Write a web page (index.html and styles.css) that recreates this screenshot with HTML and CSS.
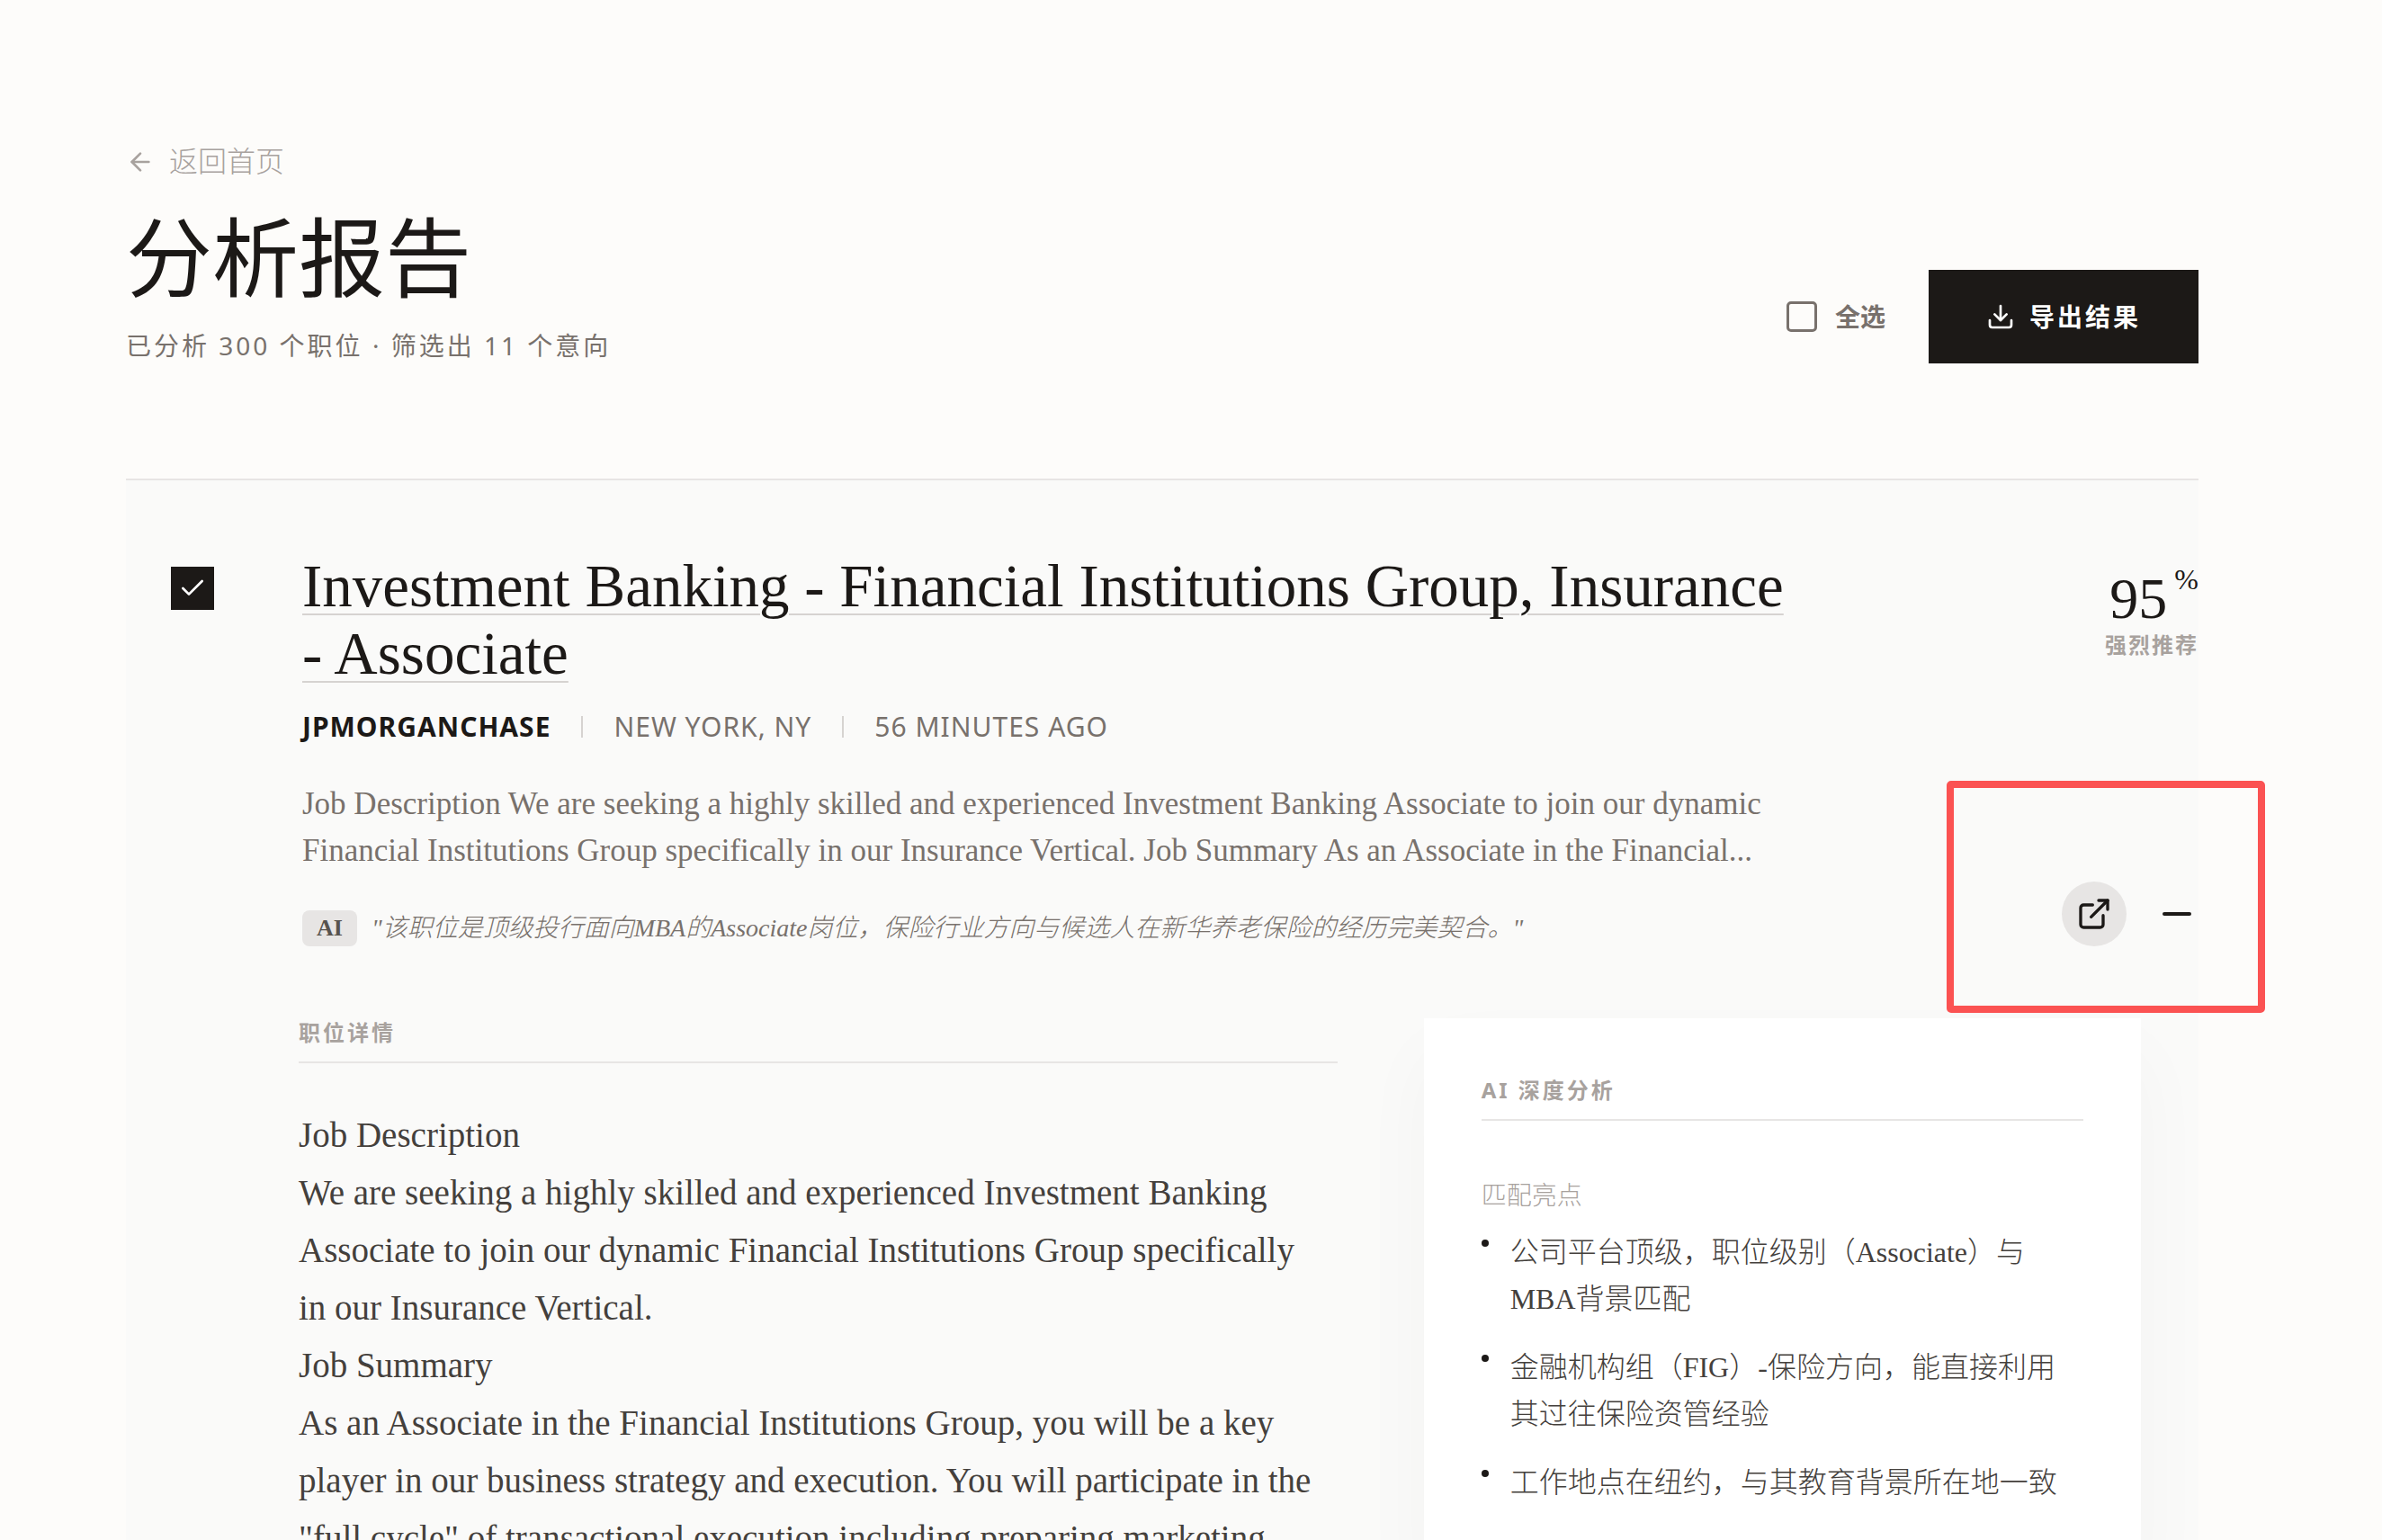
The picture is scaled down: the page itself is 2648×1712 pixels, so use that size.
FILE: index.html
```html
<!DOCTYPE html>
<html lang="zh-CN">
<head>
    <meta charset="UTF-8">
    <meta name="viewport" content="width=device-width, initial-scale=1.0">
    <title>分析报告</title>
    <link rel="stylesheet" href="styles.css">
</head>
<body>
    <div class="page">
        <header class="header">
            <div class="header-info">
                <a class="back" href="#">
                    <svg class="icon-32" viewBox="0 0 24 24" stroke-width="2"><path d="m12 19-7-7 7-7"/><path d="M19 12H5"/></svg>
                    返回首页
                </a>
                <h1>分析报告</h1>
                <p class="summary">已分析 300 个职位 · 筛选出 11 个意向</p>
            </div>
            <div class="header-actions">
                <label class="select-all">
                    <input type="checkbox" class="box">
                    全选
                </label>
                <button type="button" class="export">
                    <svg class="icon-32" viewBox="0 0 24 24" stroke-width="2"><path d="M12 3v12"/><path d="m7 10 5 5 5-5"/><path d="M21 15v4a2 2 0 0 1-2 2H5a2 2 0 0 1-2-2v-4"/></svg>
                    导出结果
                </button>
            </div>
        </header>

        <main class="job">
            <div class="job-head">
                <label class="pick">
                    <input type="checkbox" class="pick-input" aria-label="选择职位" checked>
                    <svg class="icon-32" viewBox="0 0 24 24" stroke-width="2"><path d="M20 6 9 17l-5-5"/></svg>
                </label>
                <div class="job-main">
                    <h2><a href="#">Investment Banking - Financial Institutions Group, Insurance - Associate</a></h2>
                    <div class="meta">
                        <strong>JPMORGANCHASE</strong>
                        <span class="sep"></span>
                        <span>NEW YORK, NY</span>
                        <span class="sep"></span>
                        <span>56 MINUTES AGO</span>
                    </div>
                    <p class="excerpt">Job Description We are seeking a highly skilled and experienced Investment Banking Associate to join our dynamic Financial Institutions Group specifically in our Insurance Vertical. Job Summary As an Associate in the Financial...</p>
                    <div class="ai-note">
                        <span class="badge">AI</span>
                        <em>"该职位是顶级投行面向MBA的Associate岗位，保险行业方向与候选人在新华养老保险的经历完美契合。"</em>
                    </div>
                </div>
                <div class="job-side">
                    <div class="score">
                        <div class="score-value"><span class="num">95</span><span class="pct">%</span></div>
                        <div class="score-label">强烈推荐</div>
                    </div>
                    <div class="actions">
                        <a class="open" href="#" aria-label="打开职位链接">
                            <svg class="icon-40" viewBox="0 0 24 24" stroke-width="2"><path d="M15 3h6v6"/><path d="M10 14 21 3"/><path d="M18 13v6a2 2 0 0 1-2 2H5a2 2 0 0 1-2-2V8a2 2 0 0 1 2-2h6"/></svg>
                        </a>
                        <button type="button" class="collapse" aria-label="收起">
                            <svg class="icon-48" viewBox="0 0 24 24" stroke-width="2"><path d="M5 12h14"/></svg>
                        </button>
                    </div>
                    <div class="highlight"></div>
                </div>
            </div>

            <div class="detail">
                <article class="description">
                    <h3>职位详情</h3>
                    <p>Job Description</p>
                    <p>We are seeking a highly skilled and experienced Investment Banking Associate to join our dynamic Financial Institutions Group specifically in our Insurance Vertical.</p>
                    <p>Job Summary</p>
                    <p>As an Associate in the Financial Institutions Group, you will be a key player in our business strategy and execution. You will participate in the "full cycle" of transactional execution including preparing marketing</p>
                </article>
                <aside class="analysis">
                    <h3>AI 深度分析</h3>
                    <h4>匹配亮点</h4>
                    <ul>
                        <li>公司平台顶级，职位级别（Associate）与MBA背景匹配</li>
                        <li>金融机构组（FIG）-保险方向，能直接利用其过往保险资管经验</li>
                        <li>工作地点在纽约，与其教育背景所在地一致</li>
                    </ul>
                </aside>
            </div>
        </main>
    </div>
</body>
</html>
```

FILE: styles.css
```css
* {
    box-sizing: border-box;
    margin: 0;
    padding: 0;
}
body {
    background: #fdfcfa;
    color: #1c1917;
    font-family: "Liberation Serif", "Noto Sans CJK SC", serif;
    font-size: 32px;
}
a {
    color: inherit;
    text-decoration: none;
}
button {
    border: none;
    background: none;
    color: inherit;
    cursor: pointer;
}
svg {
    display: block;
    flex: none;
    fill: none;
    stroke: currentColor;
    stroke-linecap: round;
    stroke-linejoin: round;
}
.icon-32 {
    width: 32px;
    height: 32px;
}
.icon-40 {
    width: 40px;
    height: 40px;
}
.icon-48 {
    width: 48px;
    height: 48px;
}
.page {
    height: 100vh;
    overflow: hidden;
    padding: 160px 204px 0 140px;
}

/* header */
.header {
    display: flex;
    justify-content: space-between;
    align-items: flex-end;
    padding-bottom: 128px;
}
.back {
    display: flex;
    align-items: center;
    gap: 16px;
    line-height: 40px;
    font-weight: 300;
    color: #a8a29e;
}
h1 {
    margin-top: 40px;
    font-size: 96px;
    line-height: 100px;
    font-weight: 400;
}
.summary {
    margin-top: 24px;
    font-family: "Noto Sans", "Noto Sans CJK SC", sans-serif;
    font-size: 28px;
    line-height: 40px;
    letter-spacing: 3px;
    color: #78716c;
}
.header-actions {
    display: flex;
    align-items: center;
    gap: 48px;
    font-family: "Noto Sans", "Noto Sans CJK SC", sans-serif;
    font-size: 28px;
    line-height: 40px;
    font-weight: 700;
}
.select-all {
    display: flex;
    align-items: center;
    gap: 20px;
    color: #78716c;
}
.box {
    appearance: none;
    width: 34px;
    height: 34px;
    border: 3px solid #78716c;
    border-radius: 5px;
}
.export {
    display: flex;
    align-items: center;
    gap: 16px;
    padding: 32px 64px;
    background: #1c1917;
    color: #fff;
    font: inherit;
    letter-spacing: 3px;
}

/* job row */
.job {
    border-top: 2px solid #e7e5e4;
    background: #fafaf9;
}
.job-head {
    display: flex;
    padding: 80px 0 80px 50px;
}
.pick {
    position: relative;
    flex: none;
    display: grid;
    place-items: center;
    width: 48px;
    height: 48px;
    margin: 16px 98px 0 0;
    color: #fff;
}
.pick-input {
    appearance: none;
    position: absolute;
    inset: 0;
    background: #1c1917;
}
.pick svg {
    position: relative;
}
.job-main {
    flex: 1;
}
h2 {
    font-size: 67px;
    line-height: 75px;
    font-weight: 400;
}
h2 a {
    text-decoration: underline;
    text-decoration-color: #d6d3d1;
    text-decoration-thickness: 2px;
    text-underline-offset: 8px;
}
.meta {
    display: flex;
    align-items: center;
    gap: 34px;
    margin-top: 24px;
    font-family: "Noto Sans", sans-serif;
    font-size: 30px;
    line-height: 40px;
    letter-spacing: 1px;
    color: #78716c;
}
.meta strong {
    color: #1c1917;
}
.sep {
    width: 2px;
    height: 24px;
    background: #d6d3d1;
}
.excerpt {
    margin-top: 40px;
    font-size: 35px;
    line-height: 52px;
    color: #78716c;
}
.ai-note {
    display: flex;
    align-items: center;
    gap: 16px;
    margin-top: 40px;
    font-size: 28px;
    line-height: 40px;
    font-weight: 300;
    color: #78716c;
}
.badge {
    padding: 0 16px;
    border-radius: 8px;
    background: #e7e5e4;
    color: #57534e;
    font-size: 26px;
    font-weight: 700;
}
.job-side {
    position: relative;
    flex: none;
    width: 456px;
    display: flex;
    flex-direction: column;
    justify-content: space-between;
    align-items: flex-end;
}
.score {
    padding-top: 16px;
    text-align: right;
}
.score-value {
    display: flex;
    justify-content: flex-end;
    align-items: flex-start;
    gap: 8px;
}
.num {
    font-size: 64px;
    line-height: 72px;
}
.pct {
    font-size: 32px;
    line-height: 28px;
}
.score-label {
    font-size: 24px;
    line-height: 32px;
    font-weight: 700;
    letter-spacing: 2px;
    color: #a8a29e;
}
.actions {
    display: flex;
    align-items: center;
    gap: 32px;
}
.open {
    display: grid;
    place-items: center;
    width: 72px;
    height: 72px;
    border-radius: 50%;
    background: #e7e5e4;
}
.highlight {
    position: absolute;
    right: -74px;
    bottom: -74px;
    width: 354px;
    height: 258px;
    border: 8px solid #fb5252;
    border-radius: 5px;
    pointer-events: none;
    z-index: 1;
}

/* expanded detail */
.detail {
    display: grid;
    grid-template-columns: repeat(12, 1fr);
    gap: 96px;
    padding: 0 64px 96px 192px;
}
h3 {
    padding-bottom: 16px;
    border-bottom: 2px solid #e7e5e4;
    font-family: "Noto Sans", "Noto Sans CJK SC", sans-serif;
    font-size: 24px;
    line-height: 32px;
    letter-spacing: 3px;
    color: #a8a29e;
}
.description {
    grid-column: span 7;
    font-size: 39px;
    line-height: 64px;
    color: #44403c;
}
.description h3 {
    margin-bottom: 48px;
}
.description p {
    padding-right: 16px;
}
.analysis {
    grid-column: span 5;
    padding: 64px;
    background: #fff;
    box-shadow: 0 40px 80px rgba(0, 0, 0, 0.03);
}
h4 {
    margin-top: 64px;
    font-size: 28px;
    line-height: 40px;
    font-weight: 300;
    color: #a8a29e;
}
.analysis ul {
    display: flex;
    flex-direction: column;
    gap: 24px;
    margin-top: 16px;
    list-style: none;
}
.analysis li {
    display: flex;
    gap: 24px;
    line-height: 52px;
    font-weight: 300;
    color: #44403c;
}
.analysis li::before {
    content: "";
    flex: none;
    width: 8px;
    height: 8px;
    margin-top: 12px;
    border-radius: 50%;
    background: #1c1917;
}
```
